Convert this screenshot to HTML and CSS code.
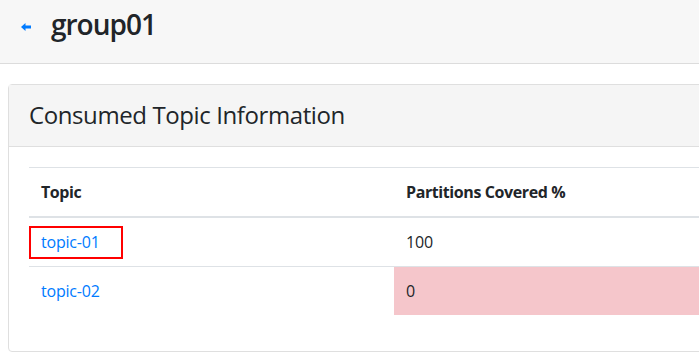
FILE: index.html
```html
<!doctype html>
<html>
<head>
<meta http-equiv="Content-Type" content="text/html; charset=utf-8"/>
<title>group01</title>
<link rel="stylesheet" href="styles.css">
</head>

<body>
<div class="topbar">
	<a href="javascript:;" class="back">
		<svg width="10" height="8" viewBox="0 0 10 8"><polygon points="0,4 4.5,0 4.5,2.6 10,2.6 10,5.4 4.5,5.4 4.5,8" fill="#007bff"/></svg>
	</a>
	<h2>group01</h2>
</div>
<div class="main">
	<div class="card">
		<div class="card-header">
			<h4>Consumed Topic Information</h4>
		</div>
		<div class="card-body">
			<table class="table">
				<thead>
					<tr>
						<th class="col-topic">Topic</th>
						<th>Partitions Covered %</th>
					</tr>
				</thead>
				<tbody>
					<tr>
						<td class="mark"><a href="javascript:;">topic-01</a><span class="mark-box"></span></td>
						<td>100</td>
					</tr>
					<tr>
						<td><a href="javascript:;">topic-02</a></td>
						<td class="danger">0</td>
					</tr>
				</tbody>
			</table>
		</div>
	</div>
</div>
</body>
</html>
```

FILE: styles.css
```css
*{ margin:0; padding:0; box-sizing:border-box;}
html,body{ overflow:hidden;}
body{ font-family:"Open Sans","Noto Sans",Arial,sans-serif; font-size:16px; line-height:1.5; color:#212529; background:#fff;}
a{ color:#007bff; text-decoration:none;}

.topbar{ display:flex; align-items:center; height:64px; padding:0 0 14px 21px; background:#f7f7f7; border-bottom:1px solid #dcdcdc;}
.topbar .back{ display:flex; margin:4px 20px 0 0;}
.topbar h2{ font-size:28px; font-weight:600; line-height:1.2; letter-spacing:-1px;}

.main{ width:1100px; padding:20px 0 0 8px;}
.card{ border:1px solid #dfdfdf; border-radius:4px; background:#fff;}
.card-header{ padding:16px 20px; background:#f5f5f5; border-bottom:1px solid #dfdfdf;}
.card-header h4{ font-size:24px; font-weight:500; line-height:1.2; letter-spacing:-0.4px;}
.card-body{ padding:20px;}

.table{ width:100%; border-collapse:collapse; margin-bottom:16px; letter-spacing:-0.2px;}
.table th,.table td{ padding:12px; text-align:left; vertical-align:top; border-top:1px solid #dee2e6;}
.table thead th{ border-bottom:2px solid #dee2e6; font-weight:700; letter-spacing:-0.4px;}
.table .col-topic{ width:365px;}
.table td.danger{ background:#f5c6cb;}
.table td.mark{ position:relative;}
.mark-box{ position:absolute; left:0; top:8px; width:94px; height:33px; border:2px solid #f00;}
```
